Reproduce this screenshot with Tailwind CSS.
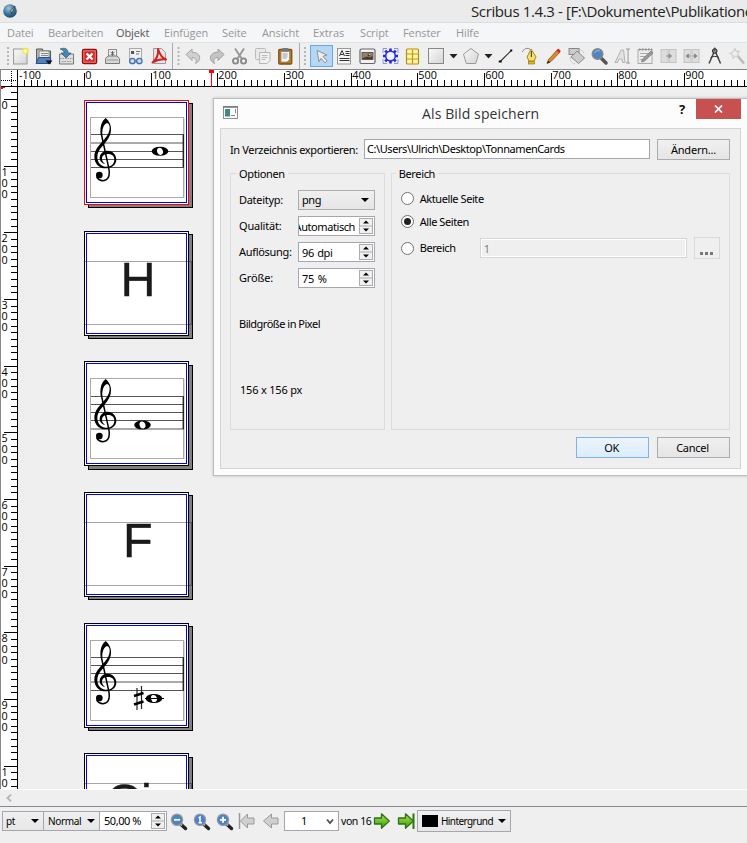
<!DOCTYPE html>
<html lang="de">
<head>
<meta charset="utf-8">
<title>Scribus 1.4.3</title>
<script src="https://cdn.jsdelivr.net/npm/@tailwindcss/browser@4"></script>
</head>
<body class="w-[747px] h-[843px] overflow-hidden bg-[#efefef] text-black font-['Noto_Sans','Open_Sans',sans-serif]">
<!-- shared symbols -->
<svg class="absolute w-0 h-0">
  <defs>
    <linearGradient id="gg" x1="0" y1="0" x2="0" y2="1"><stop offset="0" stop-color="#a5e850"/><stop offset="1" stop-color="#3f9a10"/></linearGradient>
    <linearGradient id="lg" x1="0" y1="0" x2="1" y2="1"><stop offset="0" stop-color="#fafafa"/><stop offset="1" stop-color="#d4d4d4"/></linearGradient>
    <radialGradient id="orb" cx=".4" cy=".3" r=".8"><stop offset="0" stop-color="#9fc4dc"/><stop offset=".5" stop-color="#3c7aa3"/><stop offset="1" stop-color="#12395a"/></radialGradient>
    <symbol id="lens" viewBox="0 0 18 18"><path d="M10.500 11 L15.500 15.500" stroke="#222" stroke-width="3.400" stroke-linecap="round"/><path d="M10 10.500l2 2" stroke="#aaa" stroke-width="2"/><circle cx="7" cy="6.800" r="5.700" fill="#4d82c4" stroke="#9b9b9b" stroke-width="1.200"/></symbol>
    <symbol id="arrow" viewBox="0 0 18 18"><path d="M1.500 6h7V1.800L16.300 9l-7.800 7.200V12h-7z" stroke-width="1.300" stroke-linejoin="round"/></symbol>
    <g id="spin"><rect x=".5" y=".5" width="13" height="15" fill="#f0f0f0" stroke="#acacac"/><path d="M0 8h14" stroke="#acacac"/><path d="M4 5.500h6L7 2.500zM4 10.500h6l-3 3z"/></g>
  </defs>
</svg>

<div class="flex flex-col w-[747px] h-[843px]">
  <!-- title bar -->
  <header class="h-[23px] bg-[#ebebeb] border-b border-[#dcdde0] flex items-center justify-between shrink-0 pl-[3px]">
    <svg class="w-[14px] h-[14px]" viewBox="0 0 14 14"><circle cx="7" cy="7" r="6.800" fill="url(#orb)"/><path d="M12 2L8.500 10 8 6.500z" fill="#e3cf9c" stroke="#222" stroke-width=".6"/></svg>
    <div class="w-[276px] text-[15px] leading-[22px] whitespace-nowrap text-[#222] tracking-[-0.38px] font-['Open_Sans'] overflow-hidden">Scribus 1.4.3 - [F:\Dokumente\Publikatione</div>
  </header>
  <!-- menu bar -->
  <nav class="h-[20px] bg-[#f5f6f7] border-b border-[#e3e3e3] flex items-center shrink-0 pl-[7px] text-[11px] leading-[19px] tracking-[-0.1px] text-[#969798] font-['Open_Sans']">
    <span class="w-[41px]">Datei</span><span class="w-[68px]">Bearbeiten</span><span class="w-[48px] text-[#555]">Objekt</span><span class="w-[58px]">Einfügen</span><span class="w-[40px]">Seite</span><span class="w-[51px]">Ansicht</span><span class="w-[47px]">Extras</span><span class="w-[43px]">Script</span><span class="w-[53px]">Fenster</span><span>Hilfe</span>
  </nav>
  <!-- toolbar -->
  <div class="h-[26px] flex items-center shrink-0 bg-[#efefef] [&_svg]:shrink-0">
    <div class="w-[9px] flex justify-end shrink-0"><svg class="w-[9px] h-5 translate-x-[3px]" viewBox="0 0 9 20"><path d="M5 1v19" stroke="#b5b5b5" stroke-width="2" stroke-dasharray="2 2"/></svg></div>
    <svg class="w-[23.1px] h-[22px]" viewBox="0 0 23 22"><rect x="4.500" y="4" width="13.500" height="15" fill="url(#lg)" stroke="#999"/><circle cx="16.500" cy="6" r="3.600" fill="#f7ef3a" opacity=".7"/><circle cx="16.500" cy="6" r="1.700" fill="#fffbc0"/></svg>
    <svg class="w-[23.1px] h-[22px]" viewBox="0 0 23 22"><path d="M4.500 17V4h6v2h8v10" fill="#bbb" stroke="#555"/><path d="M7 6h10v8H7z" fill="#eee" stroke="#888"/><path d="M9 8.500h7M9 10.500h7" stroke="#888"/><path d="M4 18.500L6.500 12.500H18.500v6z" fill="#4f81bd" stroke="#28508a"/><path d="M13.500 15.500h7l-3.500 4z" fill="#111"/></svg>
    <svg class="w-[23.1px] h-[22px]" viewBox="0 0 23 22"><path d="M4.500 9h14v10h-14z" fill="#dedede" stroke="#777"/><path d="M5 13.500h13M7 16.500h9" stroke="#999" stroke-dasharray="1.500 1"/><path d="M5 4c5-2 8 0 8 4h3l-5 5-5-5h3c0-2-1-3-4-4z" fill="#4b86b0" stroke="#285a7e" stroke-width=".7"/></svg>
    <svg class="w-[23.1px] h-[22px]" viewBox="0 0 23 22"><rect x="4.500" y="4.500" width="14" height="14" rx="1.500" fill="#d62a2a" stroke="#8c1010" stroke-width="1.400"/><rect x="5.800" y="5.800" width="11.400" height="11.400" fill="none" stroke="#ee8080"/><path d="M8.500 8.500l6 6M14.500 8.500l-6 6" stroke="#fff" stroke-width="2.400"/></svg>
    <svg class="w-[23.1px] h-[22px]" viewBox="0 0 23 22"><path d="M7.500 12V4.500h8V12" fill="#f4f4f4" stroke="#888"/><path d="M11.500 6v5M9.500 7l4 3M13.500 7l-4 3" stroke="#666"/><path d="M4.500 18.500v-5l2.500-2.500h9l2.500 2.500v5z" fill="#d6d6d6" stroke="#777"/><path d="M6 15h11" stroke="#999"/></svg>
    <svg class="w-[23.1px] h-[22px]" viewBox="0 0 23 22"><rect x="5.500" y="3.500" width="12" height="14" fill="#f0f0f0" stroke="#aaa"/><path d="M7 6h3v3H7z" fill="#555"/><path d="M12 6.500h4M12 9h3" stroke="#777"/><g fill="#c3daf0" stroke="#4572a8" stroke-width="1.300"><circle cx="8.300" cy="16" r="2.700"/><circle cx="15.300" cy="16" r="2.700"/><path d="M11 15.500h2"/></g></svg>
    <svg class="w-[23.1px] h-[22px]" viewBox="0 0 23 22"><path d="M5.500 3.500h8l4 4v11h-12z" fill="#e4e4e4" stroke="#999"/><path d="M4.500 17.500C9 14 10.500 9 10 4c1.500 5 3.500 9 8 10.500-5-1-9 .5-13.500 3z" fill="none" stroke="#d42020" stroke-width="2" stroke-linejoin="round"/></svg>
    <div class="w-[11px] flex items-center shrink-0"><svg class="w-[11px] h-[26px]" viewBox="0 0 11 26"><path d="M1.500 0v26" stroke="#aaa"/><path d="M7.500 4v19" stroke="#b5b5b5" stroke-width="2" stroke-dasharray="2 2"/></svg></div>
    <svg class="w-[23.1px] h-[22px]" viewBox="0 0 23 22"><path d="M4 9.500L10 4v3.200c6 0 9 4 7 8-.8 1.500-2 2.600-3.500 3.300 1.500-3 .5-6-3.500-6v3z" fill="#d0d0d0" stroke="#a6a6a6"/></svg>
    <svg class="w-[23.1px] h-[22px]" viewBox="0 0 23 22"><path d="M19 9.500L13 4v3.200c-6 0-9 4-7 8 .8 1.500 2 2.600 3.500 3.300-1.500-3-.5-6 3.500-6v3z" fill="#c4c4c4" stroke="#a0a0a0"/></svg>
    <svg class="w-[23.1px] h-[22px]" viewBox="0 0 23 22"><path d="M7 3.500l6.500 10M16 3.500l-6.500 10" stroke="#9a9a9a" stroke-width="2"/><circle cx="7.500" cy="16" r="2.600" fill="#eee" stroke="#888" stroke-width="1.800"/><circle cx="15.500" cy="16" r="2.600" fill="#eee" stroke="#888" stroke-width="1.800"/></svg>
    <svg class="w-[23.1px] h-[22px]" viewBox="0 0 23 22"><rect x="4.500" y="3.500" width="10" height="11" rx="1" fill="#eaeaea" stroke="#bababa"/><path d="M8.500 7.500h10.500v8l-3 3H8.500z" fill="#f1f1f1" stroke="#b5b5b5"/><path d="M10.500 10.500h6M10.500 12.500h6M10.500 14.500h4" stroke="#bdbdbd"/></svg>
    <svg class="w-[23.1px] h-[22px]" viewBox="0 0 23 22"><rect x="4.700" y="4.500" width="13" height="14.500" rx="1" fill="#b97d22" stroke="#81500c" stroke-width="1.300"/><path d="M7 6.500h8.500v8L13 17H7z" fill="#f5f5f5" stroke="#777" stroke-width=".6"/><rect x="8" y="3" width="6.500" height="3.500" rx="1" fill="#777"/><path d="M8.500 9h5M8.500 11h5M8.500 13h4" stroke="#999"/></svg>
    <div class="w-[13px] shrink-0"><svg class="w-[13px] h-[26px]" viewBox="0 0 13 26"><path d="M2.500 0v26" stroke="#aaa"/><path d="M8 4v19" stroke="#b5b5b5" stroke-width="2" stroke-dasharray="2 2"/></svg></div>
    <div class="w-[23px] h-[22px] bg-[#b5d6f4] border border-[#67a7e4] shrink-0"><svg class="w-[21px] h-[20px]" viewBox="0 0 21 20"><path d="M6 4.500l10 4.500-4 1.300 4 4.600-2 2-4-4.600-2 3.400z" fill="#eee" stroke="#888" stroke-width=".9"/></svg></div>
    <svg class="w-[23px] h-[22px]" viewBox="0 0 23 22"><rect x="4.500" y="3.500" width="13" height="15.500" fill="#f5f5f5" stroke="#999"/><path d="M6.500 11l2.500-5.500 2.500 5.500M7.500 9.500h3M12.500 6.500h4M12.500 8.500h4M12.500 10.500h4M6.500 13.500h10M6.500 15.500h10" stroke="#333" fill="none"/></svg>
    <svg class="w-[23px] h-[22px]" viewBox="0 0 23 22"><rect x="4" y="4" width="15" height="14.500" rx="1.500" fill="#f2f2f2" stroke="#666" stroke-width="1.200"/><rect x="6" y="7.500" width="11" height="7" fill="#9a8064" stroke="#444" stroke-width=".8"/><path d="M6.500 13.500l4-2 3 1 3-1.500v3h-10z" fill="#3f3a2c"/><path d="M13 8.500v3M11.500 10h3" stroke="#222"/><circle cx="13.500" cy="9.500" r=".8" fill="#ffc590"/></svg>
    <svg class="w-[23px] h-[22px]" viewBox="0 0 23 22"><path d="M4 8V3.500h4M15 3.500h4V8M19 14v4.500h-4M8 18.500H4V14" fill="none" stroke="#8a90f4"/><g stroke="#2228dc" stroke-width="2.600"><path d="M11.500 3.500v15M4 11h15M6.200 5.700l10.600 10.600M16.800 5.700L6.200 16.300"/></g><circle cx="11.500" cy="11" r="4.800" fill="#f4f4ff" stroke="#2a30e0" stroke-width="1.600"/></svg>
    <svg class="w-[23px] h-[22px]" viewBox="0 0 23 22"><rect x="4.500" y="4" width="12" height="15" rx="1" fill="#fdf6a5" stroke="#b58f10" stroke-width="1.200"/><path d="M10.500 4.500v14M5 9h11M5 14h11" stroke="#c0971a" stroke-width="1.200"/></svg>
    <svg class="w-[23px] h-[22px]" viewBox="0 0 23 22"><rect x="3.500" y="3.500" width="15" height="15" fill="url(#lg)" stroke="#888"/></svg>
    <svg class="w-[11px] h-[22px]" viewBox="0 0 11 22"><path d="M1.500 9h8L5.500 13.500z" fill="#222"/></svg>
    <svg class="w-6 h-[22px]" viewBox="0 0 24 22"><path d="M12 3.500l7.500 5.700-2.800 9.300H7.300L4.500 9.200z" fill="url(#lg)" stroke="#999"/></svg>
    <svg class="w-[11px] h-[22px]" viewBox="0 0 11 22"><path d="M1.500 9h8L5.500 13.500z" fill="#222"/></svg>
    <svg class="w-[24.5px] h-[22px]" viewBox="0 0 24 22"><path d="M6 16.500L17 5.500" stroke="#333" stroke-width="1.100"/><path d="M4.500 15.500h3v2h-3zM16 4.500h2v2h-2z" fill="#111"/></svg>
    <svg class="w-[23.1px] h-[22px]" viewBox="0 0 23 22"><path d="M3 7c3-5 7-4 9-2" fill="none" stroke="#888"/><path d="M12 4l-4 8 2 4h5l2-4z" fill="#f5e070" stroke="#a88b10"/><path d="M12.300 6v6" stroke="#333"/><rect x="9.500" y="16.500" width="6" height="2.500" fill="#e8b820" stroke="#8d6a10" stroke-width=".6"/></svg>
    <svg class="w-[23.1px] h-[22px]" viewBox="0 0 23 22"><path d="M5 18.500L6.500 14.500l9-10 2.500 2.500-9 9.500z" fill="#d98a2c" stroke="#8d5615" stroke-width=".8"/><path d="M14.500 5.500l1.800-2 2.500 2.500-1.800 2z" fill="#d22"/><path d="M5 18.500l1-3 2 2z" fill="#222"/></svg>
    <svg class="w-[23.1px] h-[22px]" viewBox="0 0 23 22"><rect x="4" y="3.500" width="10" height="6" fill="#ccc" stroke="#888"/><path d="M6 12l6-6 7.500 7-6 5.500z" fill="#ccc" stroke="#888"/><path d="M14 4.500c3 0 5 2 5 5M5 12c0 4 2 6 5 7" fill="none" stroke="#bbb" stroke-dasharray="1.500 1"/></svg>
    <svg class="w-[23.1px] h-[22px]" viewBox="0 0 23 22"><path d="M13 13l5 5" stroke="#555" stroke-width="3.500" stroke-linecap="round"/><circle cx="9.500" cy="9" r="5.300" fill="#4f86c2" stroke="#888" stroke-width="1.400"/><path d="M6.500 8c1-2 3-3 5-2" stroke="#a0c4e6" fill="none"/></svg>
    <svg class="w-[23.1px] h-[22px]" viewBox="0 0 23 22"><path d="M4 17.500L10 5h2.500l1.500 12.500h-2.500l-.5-3.500H8L6.500 17.500z" fill="#e2e2e2" stroke="#b3b3b3"/><path d="M15 4h4M17 4v14M15 18h4" stroke="#999"/></svg>
    <svg class="w-[23.1px] h-[22px]" viewBox="0 0 23 22"><rect x="4" y="4.500" width="14" height="14" fill="#ededed" stroke="#aaa"/><path d="M5 4.500h13" stroke="#888" stroke-width="2" stroke-dasharray="1.500 1.500"/><path d="M6 8.500h9M6 11.500h6M6 14.500h4" stroke="#aaa"/><path d="M7.500 17l1-3L17 6l2 2-8.500 8z" fill="#999" stroke="#888"/></svg>
    <svg class="w-[23.1px] h-[22px]" viewBox="0 0 23 22"><rect x="4" y="4.500" width="7" height="13" fill="#ddd" stroke="#c3c3c3"/><rect x="12" y="4.500" width="7" height="13" fill="#ddd" stroke="#c3c3c3"/><path d="M9 11h4M12 9l2.500 2-2.500 2z" stroke="#8c8c8c" fill="#8c8c8c"/></svg>
    <svg class="w-[23.1px] h-[22px]" viewBox="0 0 23 22"><rect x="4" y="4.500" width="7" height="13" fill="#ddd" stroke="#c3c3c3"/><rect x="12" y="4.500" width="7" height="13" fill="#ddd" stroke="#c3c3c3"/><path d="M8.500 9L6 11l2.500 2zM14.500 9l2.500 2-2.500 2zM8 11h2.500M12.500 11H15" stroke="#8c8c8c" fill="#8c8c8c"/></svg>
    <svg class="w-[23.1px] h-[22px]" viewBox="0 0 23 22"><path d="M11 7L6 18.500M12.500 7l5 11.500" stroke="#444" stroke-width="1.500"/><circle cx="11.700" cy="6" r="2.300" fill="#888" stroke="#222"/><path d="M11.700 2.500v3M7.500 12.500c2.500-1.500 6-1.500 8.500 0" stroke="#333" fill="none"/></svg>
    <svg class="w-[20px] h-[22px]" viewBox="0 0 20 22"><path d="M10.500 9.500l7.500 9" stroke="#bbb" stroke-width="2.400"/><path d="M9 3.500l1.200 3 3.300-.5-2 2.700 1.500 3-3.200-.7L7 13.500l-.2-3.700L3.500 8.500l3.200-1.200z" fill="#eee" stroke="#c7c7c7"/></svg>
  </div>

  <!-- rulers and page canvas -->
  <main class="h-[720px] shrink-0 w-[747px] relative">
    <svg id="canvas" class="block w-[747px] h-[720px]" viewBox="0 69 747 720" shape-rendering="auto">
      <defs>
        <g id="clef" transform="translate(0,66) scale(.33333)">
          <path d="M317 156C328 165 334 178 333 192C332 212 320 226 307 241C296 253 292 262 292 273C292 290 303 301 317 302C335 303 343 292 343 281C343 269 334 264 324 264C312 264 306 270 306 278C306 285 310 290 316 294C305 292 299 284 299 276C299 262 311 254 323 254C338 254 349 266 349 281C349 296 335 307 316 307C298 307 283 293 283 272C283 252 296 239 309 224C320 212 329 200 329 185C329 177 326 172 321 171C313 174 306 185 307 206L302 206C299 180 306 164 317 156Z"/>
          <path d="M304 204L326 305C331 330 325 343 309 344C300 344 294 341 290 332" fill="none" stroke="#000" stroke-width="4.500"/>
          <circle cx="298" cy="327" r="10"/>
        </g>
        <g id="note"><ellipse rx="8.300" ry="4.500"/><ellipse rx="2.900" ry="3.600" fill="#fff" transform="rotate(-18)"/></g>
      </defs>
      <rect x="0" y="69" width="747" height="720" fill="#efefef"/>
      <g id="pages"></g>
      <rect x="0" y="69" width="747" height="18" fill="#fff"/>
      <rect x="0" y="69" width="18" height="720" fill="#fff"/>
      <g id="ruler" font-family="Open Sans, Noto Sans, sans-serif" font-size="10.800" shape-rendering="crispEdges"></g>
      <path d="M0 69.500H747" stroke="#85868e"/>
      <path d="M.5 69V789" stroke="#85868e"/>
    </svg>

    <!-- export dialog -->
    <section class="absolute left-[213px] top-[29px] w-[540px] h-[378px] bg-[#fcfcfc] border border-[#bcbcbc] shadow-[0_0_3px_#00000030] text-[11px] leading-[14px] tracking-[-0.42px]">
      <div class="h-[29px] flex items-start pl-[9px] relative">
        <svg class="w-[15px] h-[13px] mt-[7px]" viewBox="0 0 15 13"><rect x=".5" y=".5" width="14" height="12" fill="#fff" stroke="#8c9096"/><path d="M0 1h15" stroke="#777" stroke-width="1.500"/><rect x="2" y="3" width="5" height="7.500" fill="#3d8a80"/><path d="M12.500 3v4M8 9.500h4" stroke="#789"/></svg>
        <h1 class="w-[170px] ml-[184px] mt-[3px] text-[14px] leading-[24px] tracking-[0.12px] text-[#333] font-['Open_Sans'] whitespace-nowrap">Als Bild speichern</h1>
        <div class="ml-[87px] w-[17px] pt-[2px] text-[13px] leading-[17px] font-bold text-[#111]">?</div>
        <div class="w-[45px] h-[20px] bg-[#c75050] flex items-center justify-center"><svg class="w-[9px] h-[8px]" viewBox="0 0 9 8"><path d="M1 .5l7 7M8 .5l-7 7" stroke="#fff" stroke-width="1.700"/></svg></div>
      </div>
      <div class="ml-[6px] w-[521px] h-[341px] border border-[#d4d4d4] bg-[#efefef] pl-[9px] pr-[10px] pt-[10px]">
        <div class="flex h-[21px]">
          <label class="w-[134px] pt-[4px] whitespace-nowrap tracking-[-0.36px]">In Verzeichnis exportieren:</label>
          <div class="w-[286px] h-[20px] bg-white border border-[#a5a6af] pl-[2px] pt-[2px] mr-[7px]">C:\Users\Ulrich\Desktop\TonnamenCards</div>
          <button class="w-[73px] h-[21px] border border-[#acacac] bg-linear-to-b from-[#f0f0f0] to-[#e5e5e5] tracking-[-0.2px]">Ändern...</button>
        </div>
        <div class="flex mt-[13px] gap-[6px]">
          <fieldset class="w-[155px] h-[257px] border border-[#dcdcdc] relative">
            <span class="absolute left-[5px] -top-[7px] px-[3px] bg-[#efefef] tracking-[-0.35px]">Optionen</span>
            <div class="pl-[8px] pt-[16px] flex flex-col gap-[6px]">
              <div class="flex items-center h-[20px]"><span class="w-[59px] tracking-[-0.3px]">Dateityp:</span><div class="w-[77px] h-[20px] border border-[#acacac] bg-linear-to-b from-[#f0f0f0] to-[#e5e5e5] pl-[3px] pr-[5px] flex items-center justify-between">png<svg class="w-[8px] h-[4px]" viewBox="0 0 8 4"><path d="M0 0h8L4 4z"/></svg></div></div>
              <div class="flex items-center h-[20px]"><span class="w-[59px] tracking-[-0.2px]">Qualität:</span><div class="w-[77px] h-[20px] border border-[#a5a6af] bg-white flex"><div class="w-[57px] overflow-hidden flex justify-end pt-[3px] pr-px leading-[14px]">Automatisch</div><svg class="ml-[3px] mt-[1px] w-[14px] h-[16px]" viewBox="0 0 14 16"><use href="#spin"/></svg></div></div>
              <div class="flex items-center h-[20px]"><span class="w-[59px] tracking-[-0.3px]">Auflösung:</span><div class="w-[77px] h-[20px] border border-[#a5a6af] bg-white flex"><div class="w-[57px] pl-[3px] pt-[3px] tracking-[-0.4px] [word-spacing:1px]">96 dpi</div><svg class="ml-[3px] mt-[1px] w-[14px] h-[16px]" viewBox="0 0 14 16"><use href="#spin"/></svg></div></div>
              <div class="flex items-center h-[20px]"><span class="w-[59px] tracking-[-0.2px]">Größe:</span><div class="w-[77px] h-[20px] border border-[#a5a6af] bg-white flex"><div class="w-[57px] pl-[3px] pt-[3px] tracking-[-0.2px] [word-spacing:1px]">75 %</div><svg class="ml-[3px] mt-[1px] w-[14px] h-[16px]" viewBox="0 0 14 16"><use href="#spin"/></svg></div></div>
              <div class="mt-[23px] tracking-[-0.5px]">Bildgröße in Pixel</div>
              <div class="mt-[46px] pl-px tracking-[-0.2px]">156 x 156 px</div>
            </div>
          </fieldset>
          <fieldset class="w-[340px] h-[257px] border border-[#dcdcdc] relative">
            <span class="absolute left-[4px] -top-[7px] px-[3px] bg-[#efefef] tracking-[-0.35px]">Bereich</span>
            <div class="pl-[9px] pt-[17px] flex flex-col">
              <div class="flex items-center h-[15px]"><svg class="w-[13px] h-[13px] mr-[6px]" viewBox="0 0 13 13"><circle cx="6.500" cy="6.500" r="6" fill="#fff" stroke="#707070"/></svg>Aktuelle Seite</div>
              <div class="flex items-center h-[15px] mt-[8px]"><svg class="w-[13px] h-[13px] mr-[6px]" viewBox="0 0 13 13"><circle cx="6.500" cy="6.500" r="6" fill="#fff" stroke="#707070"/><circle cx="6.500" cy="6.500" r="3.500" fill="#222"/></svg>Alle Seiten</div>
              <div class="flex items-center h-[22px] mt-[8px]"><svg class="w-[13px] h-[13px] mr-[6px]" viewBox="0 0 13 13"><circle cx="6.500" cy="6.500" r="6" fill="#fff" stroke="#707070"/></svg><span class="w-[60px]">Bereich</span><div class="w-[207px] h-[20px] border border-[#d6d6d6] shadow-[inset_0_0_0_1px_#fff] pl-[3px] pt-[3px] text-[#808080]">1</div><div class="ml-[7px] w-[26px] h-[22px] border border-[#d9d9d9] flex items-end justify-center pb-[3px]"><svg class="w-[14px] h-[3px]" viewBox="0 0 14 3"><path d="M0 0h3v3H0zM5 0h3v3H5zM10 0h3v3h-3z" fill="#777"/></svg></div></div>
            </div>
          </fieldset>
        </div>
        <div class="flex justify-end gap-[8px] mt-[7px]">
          <button class="w-[73px] h-[21px] border border-[#7eb4ea] bg-linear-to-b from-[#ecf4fc] to-[#dcecfc] pr-[2px]">OK</button>
          <button class="w-[73px] h-[21px] border border-[#acacac] bg-linear-to-b from-[#f0f0f0] to-[#e5e5e5] pr-[2px] tracking-[-0.25px]">Cancel</button>
        </div>
      </div>
    </section>
  </main>

  <!-- horizontal scrollbar -->
  <div class="h-[18px] shrink-0 border-t border-white border-b border-b-[#85868e] pl-[6px] flex items-center"><svg class="w-[6px] h-[8px]" viewBox="0 0 6 8"><path d="M5 .5L1.500 4 5 7.500" fill="none" stroke="#b5b5b5" stroke-width="1.800"/></svg></div>

  <!-- status bar -->
  <footer class="h-[36px] shrink-0 flex pt-[4px] pl-[2px] text-[11px] leading-[14px] tracking-[-0.42px] items-start [&_svg]:shrink-0">
    <div class="w-[42px] h-[20px] shrink-0 border border-[#a5a6af] flex items-center justify-between pl-[3px] pr-[4px] bg-linear-to-b from-[#f0f0f0] to-[#e7e7e7] text-[10px]">pt<svg class="w-[8px] h-[4px]" viewBox="0 0 8 4"><path d="M0 0h8L4 4z"/></svg></div>
    <div class="w-[56px] h-[20px] shrink-0 border border-l-0 border-[#a5a6af] flex items-center justify-between pl-[4px] pr-[4px] bg-linear-to-b from-[#f0f0f0] to-[#e7e7e7] text-[10px] tracking-[-0.35px]">Normal<svg class="w-[8px] h-[4px]" viewBox="0 0 8 4"><path d="M0 0h8L4 4z"/></svg></div>
    <div class="w-[67px] h-[20px] shrink-0 border border-l-0 border-[#a5a6af] bg-white flex items-center pl-[4px]"><span class="w-[47px] tracking-[-0.45px]">50,00 %</span><svg class="w-[14px] h-[16px]" viewBox="0 0 14 16"><use href="#spin"/></svg></div>
    <svg class="ml-[3px] mt-[2px] w-[18px] h-[18px]" viewBox="0 0 18 18"><use href="#lens"/><path d="M4 6.800h6" stroke="#fff" stroke-width="1.800"/></svg>
    <svg class="ml-[5px] mt-[2px] w-[18px] h-[18px]" viewBox="0 0 18 18"><use href="#lens"/><path d="M5.500 5l1.500-1v6M5.500 9.700h3.500" stroke="#fff" stroke-width="1.500" fill="none"/></svg>
    <svg class="ml-[5px] mt-[2px] w-[18px] h-[18px]" viewBox="0 0 18 18"><use href="#lens"/><path d="M4 6.800h6M7 3.800v6" stroke="#fff" stroke-width="1.800"/></svg>
    <svg class="ml-[4px] mt-[1px] w-[18px] h-[18px]" viewBox="0 0 18 18" fill="#cfcfcf" stroke="#999"><path d="M16 6H9.500V2L2.500 9l7 7v-4H16z"/><path d="M1.500 1v16" stroke-width="1.500"/></svg>
    <svg class="ml-[6px] mt-[1px] w-[18px] h-[18px]" viewBox="0 0 18 18" fill="#cfcfcf" stroke="#999"><path d="M16 6H9.500V2L1.500 9l8 7v-4H16z"/></svg>
    <div class="ml-[4px] w-[55px] h-[20px] shrink-0 border border-[#a5a6af] bg-white flex items-center justify-between pl-[16px] pr-[4px]">1<svg class="w-[8px] h-[7px]" viewBox="0 0 8 7"><path d="M1 1.500L4 5 7 1.500" fill="none" stroke="#555" stroke-width="1.900"/></svg></div>
    <span class="ml-[2px] w-[31px] mt-[3px] whitespace-nowrap shrink-0 text-[10.500px]">von 16</span>
    <svg class="ml-px mt-[1px] w-[18px] h-[18px]" viewBox="0 0 18 18" fill="url(#gg)" stroke="#2f7210"><use href="#arrow"/></svg>
    <svg class="ml-[6px] mt-[1px] w-[18px] h-[18px]" viewBox="0 0 18 18" fill="url(#gg)" stroke="#2f7210"><use href="#arrow"/><path d="M16.500 1.500v15.500" stroke-width="2"/></svg>
    <div class="ml-[2px] -mt-px w-[94px] h-[22px] shrink-0 border border-[#a5a6af] flex items-center pl-[4px] bg-linear-to-b from-[#f0f0f0] to-[#e7e7e7] text-[10px] tracking-[-0.57px]"><span class="w-[16px] h-[12px] bg-black mr-[3px]"></span><span class="w-[57px] whitespace-nowrap">Hintergrund</span><svg class="w-[8px] h-[4px]" viewBox="0 0 8 4"><path d="M0 0h8L4 4z"/></svg></div>
  </footer>
</div>

<script>
// Ruler ticks and labels: 100 pt are 66.67 px
const step = 66.667, ruler = [];
for (let i = -10; i < 100; i++) {
  const x = Math.floor(84.5 + i * step / 10) + .5, major = i % 10 === 0;
  if (x < 18 || x > 747) continue;
  ruler.push(`<path d="M${x} ${major ? 73 : 80}V86" stroke="#000"/>`);
  if (major && i > -10) ruler.push(`<text x="${x + .8}" y="79">${i * 10}</text>`);
}
ruler.push('<text x="19" y="79">-100</text>');
for (let i = -1; i < 105; i++) {
  const y = Math.floor(99.5 + i * step / 10) + .5, major = i % 10 === 0;
  if (y > 789) continue;
  ruler.push(`<path d="M${major ? 4 : 11} ${y}H17" stroke="#000"/>`);
  if (major) String(i * 10).split('').forEach((d, k) => {
    if (y + 10 + k * 11 < 790) ruler.push(`<text x="1.500" y="${y + 9.500 + k * 11}">${d}</text>`);
  });
}
ruler.push('<path d="M0 86.500H747M17.500 69V789" stroke="#000"/>');
ruler.push('<path d="M1 80.500H17M11.500 71V87" stroke="#000" stroke-dasharray="1 1"/>');
ruler.push('<path d="M209 70h5v3h-2v14h-1V73h-2zM1 87h4v1H3v1H1z" fill="#f00"/>');
document.getElementById('ruler').innerHTML = ruler.join('');

// Card pages: staves and note names alternate
const cards = [
  {y: 100, s: 103, staff: [134.5, 143, 151.5, 159.5, 167.5], off: 0, note: [160, 151.3]},
  {y: 231, s: 234, text: 'H', x: 120.5, lines: [261.5, 324.5]},
  {y: 361, s: 365, staff: [396.5, 404.5, 412.5, 420.5, 429], off: 261, note: [142.5, 425]},
  {y: 492, s: 495, text: 'F', x: 123, lines: [522.5, 585.5]},
  {y: 623, s: 626, staff: [657.5, 665.5, 673.5, 682, 690.5], off: 523, note: [154, 698.5], sharp: true},
  {y: 753, s: 757, text: 'Cis', x: 106, lines: [783.5, 846.5]}
];
document.getElementById('pages').innerHTML = cards.map((c, n) => {
  let o = `<rect x="88.500" y="${c.s + .5}" width="104" height="104" fill="#808080" stroke="#000"/>
    <rect x="84.500" y="${c.y + .5}" width="104" height="104" fill="#fff" stroke="${n ? '#000' : '#f00'}"/>`;
  if (c.staff) {
    o += `<rect x="90.500" y="${117.500 + c.off}" width="93" height="80" fill="none" stroke="#aaa"/><path d="M184.500 ${118 + c.off}v80" stroke="#ddd"/>`;
    o += c.staff.map(y => `<path d="M91 ${y}H184" stroke="#555"/>`).join('');
    o += `<path d="M183.300 ${c.staff[0]}V${c.staff[4]}" stroke="#222" stroke-width="1.400"/>`;
    o += `<use href="#clef" y="${c.off}"/><use href="#note" x="${c.note[0]}" y="${c.note[1]}"/>`;
    if (c.sharp) o += '<path d="M145 698.500H164" stroke="#000"/><path d="M137 688v22M141.500 686v23" stroke="#222" stroke-width="1.200"/><path d="M134 696l9.500-3M134 704.500l9.500-3" stroke="#000" stroke-width="2.500"/>';
  } else {
    o += `<path d="M85 ${c.lines[0]}H191.500V${c.lines[1]}H85" fill="none" stroke="#000" stroke-opacity=".35"/>`;
    o += `<text x="${c.x}" y="${c.lines[0] + 34}" font-family="Liberation Sans" font-size="48.500" fill="#1a1a1a" stroke="#1a1a1a" stroke-width=".4">${c.text}</text>`;
  }
  return o + `<rect x="86.500" y="${c.y + 2.500}" width="100" height="100" fill="none" stroke="#00f" shape-rendering="crispEdges"/>`;
}).join('');
</script>
</body>
</html>
